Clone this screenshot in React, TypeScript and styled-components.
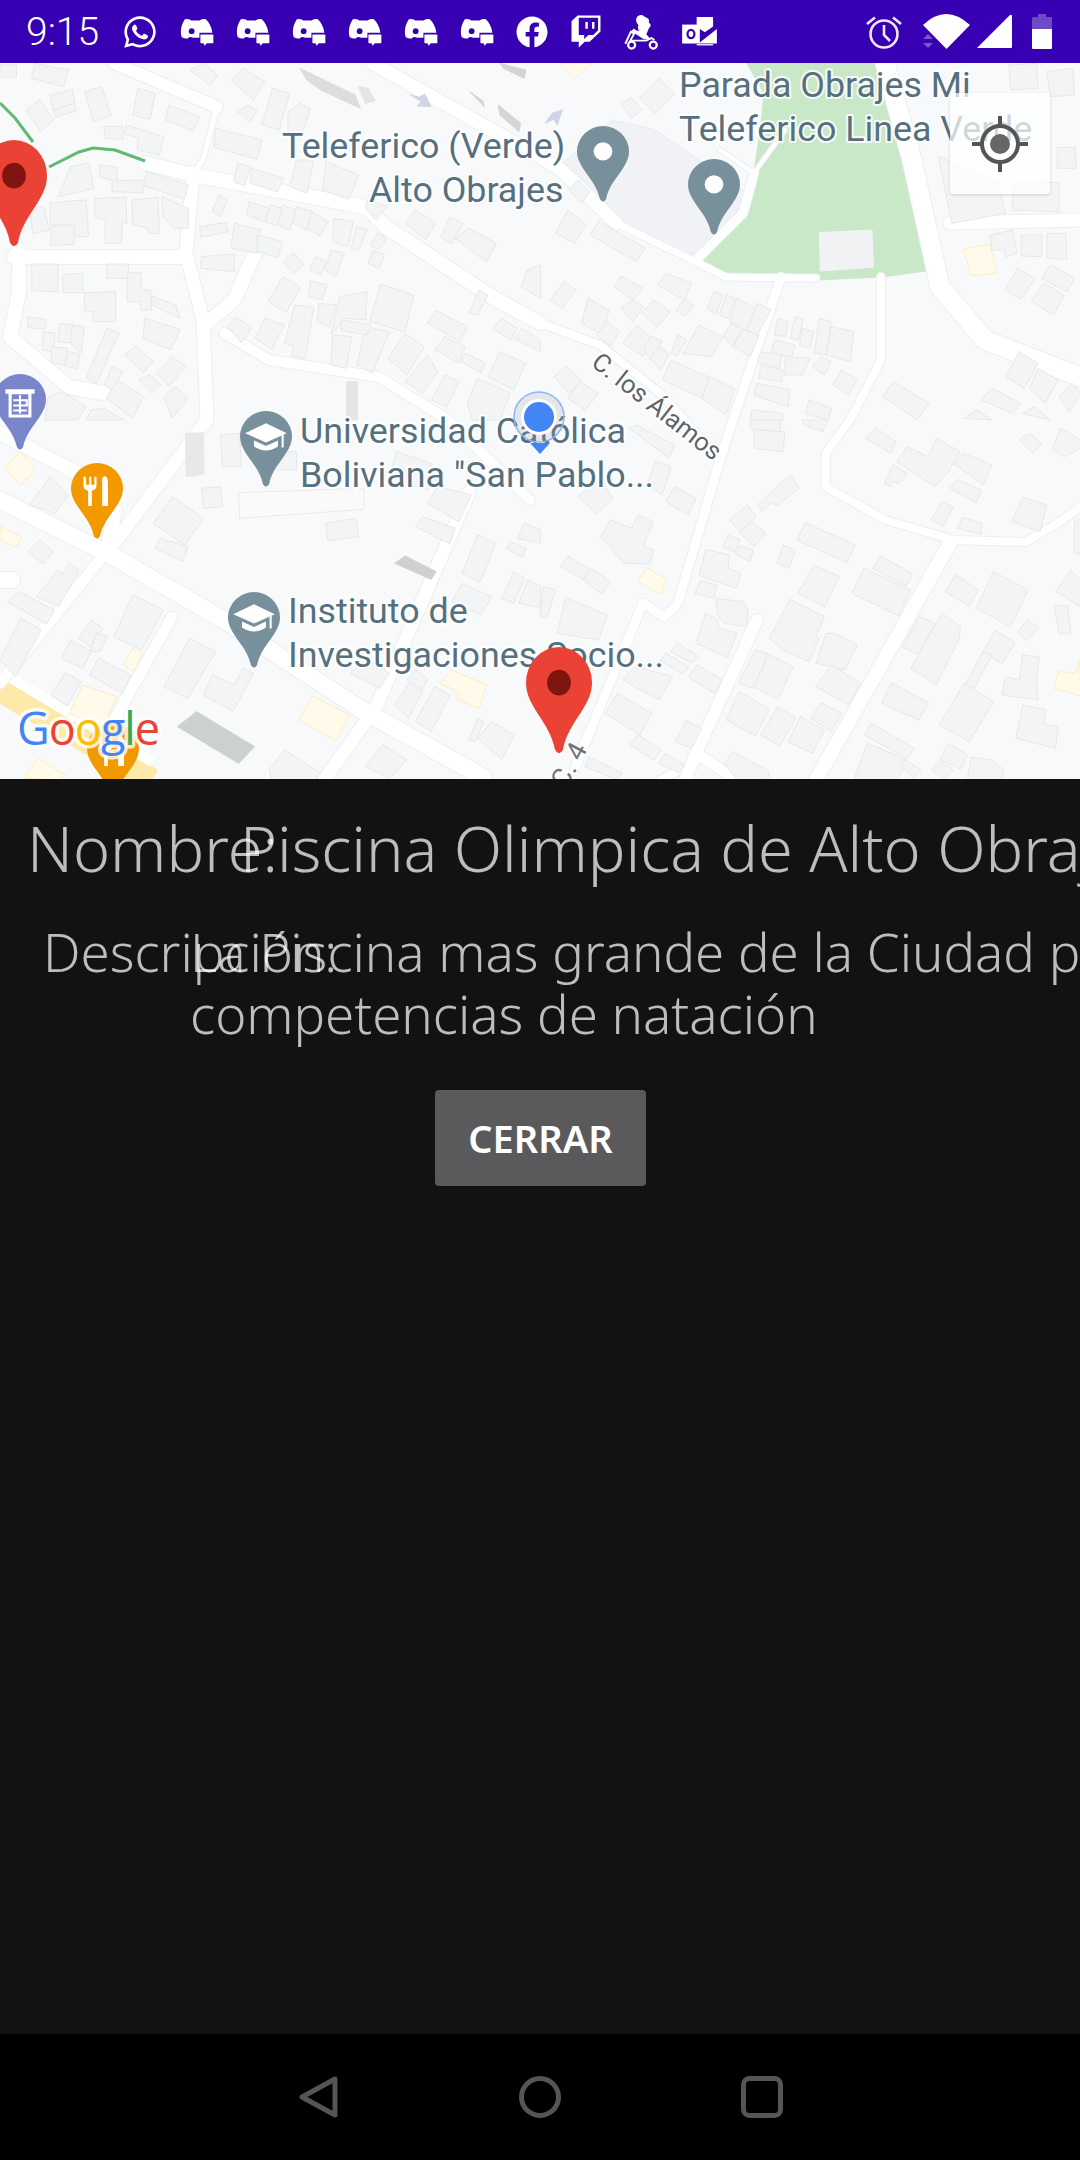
import React from "react";
import styled, { createGlobalStyle } from "styled-components";
import { FaWhatsapp, FaFacebook, FaTwitch } from "react-icons/fa";

const PURPLE = "#3700b3";

const Global = createGlobalStyle`
  html, body { margin: 0; padding: 0; background: #121212; }
  #root { width: 1080px; height: 2160px; }
`;

const Screen = styled.div`
  width: 1080px;
  height: 2160px;
  display: flex;
  flex-direction: column;
  overflow: hidden;
  background: #121212;
`;

const StatusBar = styled.div`
  height: 63px;
  flex: none;
  display: flex;
  align-items: center;
  background: ${PURPLE};
  color: #fff;
  padding: 0 28px 0 26px;
`;

const Clock = styled.span`
  font: 300 39px Roboto, sans-serif;
  width: 73px;
  margin-right: 23px;
`;

const NotifIcons = styled.div`
  display: flex;
  align-items: center;
  gap: 22px;
`;

const SysIcons = styled.div`
  display: flex;
  align-items: center;
  margin-left: auto;
`;

const Glyph = styled.svg<{ $w: number; $h: number; $mr?: number }>`
  display: block;
  flex: none;
  width: ${(p) => p.$w}px;
  height: ${(p) => p.$h}px;
  margin-right: ${(p) => p.$mr ?? 0}px;
`;

const Discord = () => (
  <Glyph $w={34} $h={28} viewBox="0 0 105 85">
    <path
      fill="#fff"
      d="M15 3Q28 0 35 7H60Q67 0 80 3Q97 20 100 45H60V60H40Q30 55 25 62Q15 65 5 58Q-3 30 15 3Z"
    />
    <circle cx="36" cy="40" r="9" fill={PURPLE} />
    <rect x="63" y="50" width="40" height="27" rx="2" fill="#fff" />
    <path d="M72 76H84L76 85Z" fill="#fff" />
  </Glyph>
);

const Scooter = () => (
  <Glyph $w={35} $h={36} viewBox="0 0 110 110">
    <path
      fill="#fff"
      d="M42 6Q56 -4 66 8Q82 12 78 26Q90 32 78 44Q74 54 70 62L84 78H62L50 70L34 60L24 52L30 44Q40 52 48 52Q40 42 46 34Q32 20 42 6Z"
    />
    <path d="M4 92L22 54L32 60L20 82H70L86 74L96 80" fill="none" stroke="#fff" strokeWidth="6" />
    <circle cx="24" cy="96" r="11" fill="none" stroke="#fff" strokeWidth="7" />
    <circle cx="92" cy="96" r="11" fill="none" stroke="#fff" strokeWidth="7" />
  </Glyph>
);

const Outlook = () => (
  <Glyph $w={37} $h={30} viewBox="0 0 110 95">
    <path fill="#fff" d="M46 0H98V30L72 48L46 32Z" />
    <path fill="#fff" d="M52 84L110 38V84Z" />
    <path fill="#fff" d="M46 86H98V90H46Z" />
    <rect x="0" y="24" width="56" height="60" fill="#fff" />
    <ellipse cx="28" cy="54" rx="11" ry="13" fill="none" stroke={PURPLE} strokeWidth="7" />
  </Glyph>
);

const Alarm = () => (
  <Glyph $w={36} $h={35} $mr={21} viewBox="0 0 36 35" fill="none" stroke="#efe9fb" strokeWidth="2.6">
    <circle cx="18" cy="20" r="13.5" />
    <path d="M18 11V21L24 27M1 10L9 3.5M35 10L27 3.5" />
  </Glyph>
);

const Wifi = () => (
  <Glyph $w={47} $h={35} $mr={7} viewBox="0 0 47 35">
    <path fill="#fff" d="M0 11Q23 -11 47 11L23.5 35Z" />
    <path fill="#7a55cc" d="M0 25L5 20L10 25ZM0 29H10L5 34Z" />
  </Glyph>
);

const Signal = () => (
  <Glyph $w={35} $h={35} $mr={20} viewBox="0 0 35 35">
    <path fill="#fff" d="M0 34L33 1Q35 0 35 2V33Q35 34 34 34Z" />
  </Glyph>
);

const Battery = () => (
  <Glyph $w={20} $h={35} viewBox="0 0 20 35">
    <path fill="#7049c9" d="M6 0H14V3H19Q20 3 20 4V15H0V4Q0 3 1 3H6Z" />
    <path fill="#fff" d="M0 15H20V34Q20 35 19 35H1Q0 35 0 34Z" />
  </Glyph>
);

const Whatsapp = styled(FaWhatsapp)`
  width: 36px;
  height: 36px;
  flex: none;
`;
const Facebook = styled(FaFacebook)`
  width: 32px;
  height: 32px;
  flex: none;
`;
const Twitch = styled(FaTwitch)`
  width: 32px;
  height: 37px;
  flex: none;
`;

/* ---------------------- map ---------------------- */

const MapArea = styled.div`
  position: relative;
  height: 716px;
  flex: none;
  overflow: hidden;
  background: #f8f9fb;
`;

const MapSvg = styled.svg`
  display: block;
  width: 1080px;
  height: 716px;
`;

const Block = styled.polygon<{ $fill?: string; $line?: string }>`
  fill: ${(p) => p.$fill ?? "#f2f4f5"};
  stroke: ${(p) => p.$line ?? "#e6e8ea"};
  stroke-width: 1;
  vector-effect: non-scaling-stroke;
`;

const MapLabel = styled.text<{ $size?: number; $color?: string }>`
  font-family: Roboto, sans-serif;
  font-size: ${(p) => p.$size ?? 35.8}px;
  fill: ${(p) => p.$color ?? "#56707f"};
  stroke: #fff;
  stroke-opacity: 0.85;
  stroke-width: 4px;
  stroke-linejoin: round;
  paint-order: stroke;
`;

const GoogleMark = styled.text`
  font-family: "Open Sans", sans-serif;
  font-weight: 500;
  font-size: 45px;
  letter-spacing: -1px;
  stroke: #fff;
  stroke-opacity: 0.8;
  stroke-width: 7px;
  stroke-linejoin: round;
  paint-order: stroke;
`;

const LocateButton = styled.div`
  position: absolute;
  top: 30px;
  right: 30px;
  width: 100px;
  height: 101px;
  display: flex;
  align-items: center;
  justify-content: center;
  border-radius: 3px;
  background: rgba(255, 255, 255, 0.72);
  box-shadow: 0 1px 3px rgba(0, 0, 0, 0.16);
`;

const PIN = "M50 0A50 50 0 0 1 100 50C100 84 64 104 56 144Q50 154 44 144C36 104 0 84 0 50A50 50 0 0 1 50 0Z";

const Pin: React.FC<{
  x: number;
  y: number;
  w?: number;
  h?: number;
  color: string;
  children?: React.ReactNode;
}> = ({ x, y, w = 52, h = 76, color, children }) => (
  <g transform={`translate(${x},${y}) scale(${w / 100},${h / 150})`}>
    <path d={PIN} fill={color} />
    {children}
  </g>
);

const Cap = () => (
  <g fill="#fff">
    <path d="M50 24L90 44L50 62L10 44Z" />
    <path d="M27 58V70Q50 86 73 70V58L50 69Z" />
    <rect x="80" y="46" width="4" height="26" />
  </g>
);

const Dot = () => <circle cx="50" cy="50" r="18" fill="#fff" />;

const Cutlery = () => (
  <g fill="#fff">
    <path d="M24 27V45Q24 53 33 55V85H40V55Q49 53 49 45V27H45V43H39V27H35V43H29V27Z" />
    <path d="M60 85V32Q60 26 66 26Q71 28 71 40V85Z" />
  </g>
);

const Bank = () => (
  <g>
    <path fill="#fff" d="M22 30H78V39H72V86H28V39H22Z" />
    <rect x="34" y="40" width="32" height="40" fill="#7986cb" />
    <path fill="none" stroke="#fff" strokeWidth="4" d="M50 42V78M37 52H63V62H37M37 72H63" />
  </g>
);

const c2 = "0 60 .3448 .3333";
const c3 = "540 60 .3448 .3333";
const c4 = "0 420 .3448 .3333";
const c5 = "540 420 .3448 .3333";
const tf = (s: string) => {
  const [a, b, c, d] = s.split(" ");
  return `translate(${a},${b}) scale(${c},${d})`;
};

const blocks2 = [
  "0,15 48,15 48,52 0,52","100,10 198,30 185,80 92,55","75,150 115,120 155,180 118,215","145,105 210,88 218,130 152,148","155,150 215,130 222,152 160,172",
  "245,95 295,80 322,165 272,185","400,85 450,100 435,178 385,165","490,135 578,170 560,212 480,180","302,200 355,198 358,238 305,235","365,195 475,230 462,285 398,270 400,235 360,220",
  "205,320 258,308 272,385 168,410","290,315 340,322 338,362 415,360 415,398 325,395 325,360 288,352","425,335 546,375 535,418 418,378","145,430 212,422 250,420 257,530 215,530 212,495 145,495",
  "275,415 365,412 368,490 355,490 352,550 305,550 305,480 275,470","382,420 458,412 462,520 432,520 430,505 385,492","470,410 546,445 546,505 505,505 472,470","85,440 128,440 142,510 95,522","147,500 215,495 215,553 147,556",
  "92,612 168,612 168,695 92,692","182,645 240,640 240,698 182,698","310,612 372,612 372,655 310,655","245,698 335,695 335,785 270,785 270,755 245,755","370,638 410,638 410,690 437,690 440,750 408,750 405,725 368,725","440,708 510,735 522,775 440,735",
  "80,770 135,780 130,808 80,802","125,815 160,820 155,875 122,870","172,790 215,795 212,850 168,845","210,795 245,800 235,878 205,850","150,860 195,865 190,915 148,908","195,875 232,882 225,928 188,918",
  "420,775 522,808 495,870 415,835","310,805 345,820 280,970 250,955","362,885 392,858 445,905 415,938","325,920 355,935 330,990 302,975","340,960 415,1010 385,1075 310,1015","402,960 435,945 467,975 440,1000","452,940 500,890 540,920 490,978","475,1010 510,980 545,1015 500,1075","140,1010 180,995 250,1040 225,1080 130,1080","265,1050 300,1045 360,1080 250,1080",
  "670,60 705,25 768,65 735,120","690,155 720,135 745,150 725,188","790,85 840,100 810,210 760,195","835,155 870,130 900,148 870,235 835,220","625,205 760,240 745,298 620,262","690,310 728,320 708,378 678,365","730,325 822,355 805,395 725,370","860,300 910,300 890,400 840,380","945,305 1040,345 1012,418 935,390",
  "550,30 590,10 632,45 610,75","722,425 780,445 770,485 715,465","785,435 818,445 805,498 770,485","820,435 860,450 840,510 805,495","860,440 908,455 890,510 850,490","905,455 952,485 930,528 890,505","968,475 1025,485 1010,560 965,545","1035,500 1065,508 1040,572 1018,565","1095,518 1120,535 1100,570 1075,558","1080,570 1115,585 1100,625 1068,610",
  "960,570 998,580 975,650 940,630","915,590 945,605 930,645 898,630","850,578 882,615 850,640 822,605","680,490 755,510 745,580 670,565","745,525 820,545 805,592 745,575","635,405 658,420 640,470 615,455","580,500 655,487 662,515 582,532","584,590 680,582 680,635 582,625",
  "820,650 872,682 830,758 778,725","900,662 948,675 935,720 895,710","855,735 910,742 885,895 845,888 850,858 825,850","925,730 975,735 955,800 920,785","985,710 1065,695 1060,780 1000,775 960,825","1103,672 1200,705 1175,815 1072,785","1060,800 1130,815 1080,940 1035,915","990,780 1075,795 1065,825 990,812","965,825 1020,830 1005,925 960,915",
  "660,800 685,770 730,805 700,848","768,775 825,795 790,868 740,835","1065,420 1125,440 1090,480 1060,445","1175,490 1205,450 1265,490 1235,538","1278,530 1305,472 1342,490 1310,552","1320,535 1360,505 1440,550 1410,605","1240,790 1265,752 1355,800 1335,845","1262,870 1290,830 1350,860 1330,908","1335,905 1350,880 1408,910 1395,938","1430,805 1455,775 1500,805 1480,840","1490,835 1515,805 1568,840 1568,875","1360,760 1390,690 1415,705 1385,765","1125,895 1175,820 1230,860 1180,945","1175,965 1240,885 1270,935 1225,1000","1252,1020 1290,945 1332,965 1295,1040","1355,1030 1385,955 1480,1000 1450,1080 1370,1080","1415,950 1450,875 1525,910 1490,990","1510,680 1530,630 1568,615 1568,715",
];

const blocks3 = [
  "235,130 265,112 295,150 265,175","290,115 345,55 390,100 335,160","1360,15 1440,10 1445,85 1365,90","1470,35 1545,25 1550,105 1480,110","1195,490 1155,290 1330,365 1350,460","1370,365 1505,368 1505,455 1370,450","1500,262 1552,262 1555,325 1500,325",
  "1305,525 1370,510 1385,580 1350,590 1345,570 1310,570","1395,525 1455,525 1455,590 1395,588","1470,520 1525,520 1528,598 1470,595","1348,690 1385,625 1435,655 1395,718","1455,655 1480,615 1550,655 1528,695","1425,725 1460,668 1520,705 1490,765",
  "215,680 235,648 298,685 270,720","340,675 365,640 440,670 420,720","120,790 140,715 200,750 180,825","235,745 265,720 300,740 270,785","295,760 330,720 378,755 340,800","395,750 420,715 445,738 420,770","165,825 195,785 230,815 205,860","240,850 280,795 320,830 300,890","300,860 325,830 355,845 320,900","320,895 345,860 375,880 350,930","415,880 460,795 530,830 500,890","380,880 400,825 425,840 395,890","530,830 555,790 585,805 560,860","485,745 505,695 530,705 510,765","520,765 540,705 565,715 545,775","550,785 570,715 625,745 605,815","600,810 630,730 670,750 630,825","560,860 590,810 635,825 610,890",
  "680,825 690,775 720,785 712,830","725,835 740,770 762,780 750,840","752,855 760,805 795,815 782,865","795,880 810,775 845,785 830,885","830,885 845,800 910,815 900,905","670,880 680,840 740,855 730,890","630,905 640,875 700,885 695,925","635,955 640,915 705,930 700,965","710,945 712,890 785,895 760,945","620,1005 630,970 725,990 720,1040","610,1080 615,1050 705,1060 705,1080","770,1060 780,1020 845,1045 835,1080","790,920 815,890 845,905 825,945","850,975 875,930 920,960 895,1005",
  "355,960 380,900 495,955 470,1015","470,1015 490,950 565,985 540,1065","80,1015 115,965 170,1000 130,1050","40,950 75,920 120,960 85,1000","30,720 70,665 105,690 65,745","45,520 80,450 135,495 100,550","145,525 170,483 305,565 280,605","85,390 110,360 145,395 120,430","995,1010 1025,965 1128,1030 1095,1080","1280,1020 1310,985 1395,1030 1370,1060","1350,950 1390,875 1445,910 1405,985","1420,985 1445,925 1502,960 1465,1030","1505,1010 1545,970 1568,1000 1535,1055","1230,1075 1265,1050 1310,1080","1400,1060 1435,1040 1480,1080",
];

const blocks4 = [
  "640,45 695,40 700,140 645,140","800,95 860,95 860,150 800,150","945,310 1032,295 1040,350 950,362","585,205 640,200 645,260 590,265","445,310 500,230 590,295 535,375","450,385 465,355 545,380 530,425","85,255 145,170 200,225 160,280","1240,250 1270,200 1368,225 1330,305","1205,320 1225,290 1320,325 1305,372","1150,95 1250,130 1240,210 1130,170","1340,460 1385,345 1438,370 1392,487","1310,545 1340,490 1425,530 1395,585","1468,385 1480,365 1525,385 1515,412","1455,535 1490,455 1522,475 1490,550","1505,550 1530,480 1568,500 1568,565","1500,355 1520,310 1568,330 1568,370",
  "80,395 115,360 155,395 125,432","105,530 170,450 180,465 200,430 230,450 170,560","22,545 55,515 158,570 135,612","0,720 60,595 120,630 45,770","330,650 385,525 475,570 410,690","228,655 265,600 298,625 262,680","262,695 280,640 312,650 290,695","178,715 205,660 265,695 240,745","260,765 285,715 380,765 355,820","148,825 190,758 235,785 195,858","475,800 550,655 625,695 545,835","590,825 615,765 680,795 705,745 735,760 675,875","1015,760 1060,720 1130,760 1100,805",
  "1145,855 1185,790 1225,815 1185,895","1205,905 1260,800 1305,825 1250,935","1180,780 1205,750 1240,775 1225,810","1360,960 1385,895 1402,905 1380,965","1385,955 1425,905 1492,945 1455,1018","1060,1040 1110,975 1180,1020 1130,1075","780,1050 825,990 930,1060 915,1080 790,1080",
];

const blocks5 = [
  "610,0 700,0 695,35 610,25","620,30 710,35 705,95 622,85","760,0 835,0 820,35 765,15","945,55 975,25 1033,65 1018,100","1035,125 1065,80 1125,110 1150,55 1218,95 1185,155 1145,200","998,190 1025,135 1065,160 1040,190 1020,185 1015,200","1200,130 1230,100 1310,135 1285,195","1190,205 1210,178 1280,210 1265,248","1135,300 1165,245 1198,262 1170,320","1212,325 1225,292 1282,310 1278,342","1368,305 1400,232 1470,255 1450,335","1390,60 1420,40 1455,70 1430,100","1485,90 1510,25 1568,60 1568,85 1520,110",
  "260,25 280,15 390,75 375,115","310,195 335,125 380,140 355,225","365,245 390,200 452,235 430,285","110,230 170,170 212,235 165,282","175,350 205,300 265,325 285,285 328,305 300,378 330,390 318,432 245,430","60,440 80,408 140,445 125,478","125,480 150,445 205,485 180,522","0,590 10,500 45,510 20,595","50,640 75,532 195,585 170,660",
  "630,255 725,165 752,205 690,255 670,250 645,275","550,300 600,255 628,290 580,335","580,340 615,305 655,340 620,380","530,380 545,345 580,360 565,398","568,405 580,378 618,390 610,425","462,468 480,388 550,405 545,445 582,460 570,505","450,520 465,482 512,495 505,535","510,535 590,545 603,570 600,620 535,610 515,585","452,670 480,580 515,600 520,625 572,640 545,712",
  "745,360 770,308 915,375 890,428","688,430 705,375 740,390 722,445","748,520 795,435 868,470 825,562","905,520 940,445 1075,510 1040,588","965,445 985,408 1080,460 1062,498","665,655 725,538 825,590 800,650 810,655 780,725 705,690","800,730 830,640 855,640 920,675 885,750","800,800 845,735 930,790 895,855","575,790 625,690 660,700 620,805","620,800 665,705 735,740 690,838","540,900 578,815 665,868 625,948","640,945 690,860 742,895 695,978","720,965 755,890 825,930 790,1000","785,895 815,848 875,880 845,935","378,695 400,670 460,710 440,730","348,722 365,700 430,740 415,762","430,772 455,735 530,780 505,820","240,780 275,740 385,770 345,840","190,880 225,820 325,880 290,945","392,965 425,902 468,925 440,985","260,975 285,945 352,990 330,1020","345,1030 365,1000 420,1035 405,1060","140,1010 240,1060 225,1080 130,1040","535,1030 560,995 665,1055 660,1080 570,1080",
  "990,850 1020,788 1128,850 1098,900","940,945 960,910 1085,985 1065,1015","910,1080 950,970 1065,1020 1035,1080","1050,680 1100,590 1145,610 1100,705","1075,745 1165,580 1220,620 1215,660 1150,795","1175,515 1205,465 1272,510 1245,558","1265,565 1315,455 1415,510 1365,620","1285,695 1320,630 1378,668 1340,730","1230,800 1285,695 1310,705 1260,805","1158,915 1230,790 1315,845 1245,965","1340,825 1350,770 1390,780 1400,705 1448,712 1440,785 1445,840","1380,955 1400,855 1468,870 1460,912 1503,920 1495,985","1160,1020 1185,970 1240,1005 1220,1048","1135,1050 1160,1025 1200,1050 1170,1080","1240,1080 1250,1012 1310,1020 1345,1050 1340,1080","1045,1040 1060,1020 1105,1050 1085,1075","1385,635 1415,598 1445,625 1410,662","1490,555 1530,558 1540,640 1505,640","1495,515 1540,450 1568,480 1568,560","1550,300 1568,300 1568,400 1550,400",
];

const yellow: [string, string][] = [
  [c3, "1228,568 1305,552 1325,638 1250,648"],
  [c3, "60,10 150,10 100,55"],
  [c4, "15,145 58,95 105,148 60,195"],
  [c4, "0,320 60,350 50,382 0,360"],
  [c4, "385,685 415,700 388,755 358,735"],
  [c4, "240,795 338,830 300,920 200,880"],
  [c4, "905,828 1015,885 975,962 868,900"],
  [c4, "1310,750 1412,795 1390,865 1325,840 1330,815 1275,790"],
  [c4, "70,1075 110,1015 190,1065 170,1080"],
  [c5, "310,443 368,478 348,522 283,485"],
  [c5, "1505,755 1555,760 1565,715 1568,828 1490,805"],
];

const shades: [string, string, string][] = [
  [c2, "870,25 930,55 1030,105 1045,145 930,90 890,60", "#dcdede"],
  [c2, "1040,80 1060,130 1088,122 1068,85", "#e4e6e6"],
  [c2, "1362,95 1405,140 1400,122", "#d4d6d6"],
  [c2, "1445,135 1510,190 1505,215 1450,165", "#d4d6d6"],
  [c2, "1450,10 1525,30 1520,55 1460,25", "#d3d5d5"],
  [c2, "1005,965 1037,965 1037,1080 1005,1080", "#e3e5e5"],
  [c4, "538,40 590,38 592,162 540,170", "#e7e9e9"],
  [c4, "1145,430 1175,408 1265,455 1250,478", "#cfd1d1"],
  [c4, "515,920 570,875 738,980 692,1030", "#ccd0cf"],
  [c2, "1190,105 1215,112 1232,102 1250,140 1210,138 1222,125", "#d2d5e8"],
  [c3, "15,190 35,160 65,150 50,195 40,178", "#d2d5e8"],
];

/* [points, width] */
const roads: [string, number][] = [
  ["114,63 217,107", 12],
  ["145,163 193,175 366,207 386,227 497,300 540,323", 14],
  ["540,323 600,345 662,395 720,460", 8],
  ["372,63 540,157 561,170 616,223", 13],
  ["616,223 692,260 726,277 816,278", 7],
  ["217,107 203,160 193,173", 5],
  ["193,173 186,253 203,320 207,420 107,553", 13],
  ["14,257 186,257", 14],
  ["19,250 19,293 10,337 69,387 103,393", 14],
  ["255,253 234,300 207,323", 14],
  ["224,333 269,360 379,377 448,420 530,500", 10],
  ["754,173 743,213 699,257", 9],
  ["720,150 754,173 785,130", 4],
  ["885,63 912,160 940,287 985,340 1080,377", 19],
  ["950,223 1080,220", 13],
  ["781,277 733,420 719,463 678,603 664,617 643,603 574,770", 9],
  ["881,277 881,360 850,420 826,453 826,487 885,520 954,540 1026,542 1055,525 1080,507", 8],
  ["950,543 816,780", 14],
  ["757,620 702,740 685,780", 12],
  ["702,757 737,780", 11],
  ["0,500 107,553 224,620 362,710 483,777", 17],
  ["0,433 77,473 115,510 107,553", 14],
  ["100,560 0,683", 11],
  ["172,617 114,720", 11],
  ["469,493 376,707 324,780", 13],
  ["0,580 12,580", 16],
  ["680,770 660,780", 8],
];

const Map = () => (
  <MapArea>
    <MapSvg viewBox="0 63 1080 716">
      <rect x="0" y="63" width="1080" height="716" fill="#f8f9fb" />
      <g transform={tf(c3)}>
        <Block $fill="#f1f2f5" $line="#e9ebee" points="210,180 335,210 600,400 520,555 460,585 410,575 230,480 60,315" />
        <Block
          $fill="#c8e8c8"
          $line="#c8e8c8"
          points="600,10 970,10 1050,270 1140,630 1000,650 810,660 530,640 460,600 520,555 590,420 620,340 640,200 650,100"
        />
        <Block $fill="#f1f2f4" $line="#f1f2f4" points="810,518 963,510 967,622 813,633" />
      </g>
      <polyline points="0,690 152,780" fill="none" stroke="#fde9a9" strokeWidth="24" />
      <polyline points="0,672 152,762" fill="none" stroke="#fff" strokeWidth="10" />
      <g fill="none" strokeLinecap="round" strokeLinejoin="round">
        {roads.map(([p, w]) => (
          <polyline key={p + "b"} points={p} stroke="#eceef0" strokeWidth={w + 2} />
        ))}
        {roads.map(([p, w]) => (
          <polyline key={p} points={p} stroke="#fff" strokeWidth={w} />
        ))}
      </g>
      <g transform={tf(c2)}>
        {blocks2.map((p) => (
          <Block key={p} points={p} />
        ))}
      </g>
      <g transform={tf(c3)}>
        {blocks3.map((p) => (
          <Block key={p} points={p} />
        ))}
      </g>
      <g transform={tf(c4)}>
        {blocks4.map((p) => (
          <Block key={p} points={p} />
        ))}
        <Block $fill="#fafafa" $line="#e8eaeb" points="692,218 1055,205 1055,268 695,295" />
      </g>
      <g transform={tf(c5)}>
        {blocks5.map((p) => (
          <Block key={p} points={p} />
        ))}
      </g>
      {yellow.map(([t, p]) => (
        <g key={p} transform={tf(t)}>
          <Block $fill="#fffaea" $line="#fdeec0" points={p} />
        </g>
      ))}
      {shades.map(([t, p, f]) => (
        <g key={p} transform={tf(t)}>
          <Block $fill={f} $line={f} points={p} />
        </g>
      ))}
      <polyline points="0,103 15,118 33,142" fill="none" stroke="#62b96f" strokeWidth="3" />
      <polyline points="49,167 79,152 93,148 115,150 145,161" fill="none" stroke="#62b96f" strokeWidth="3" />

      <MapLabel x="282" y="158">Teleferico (Verde)</MapLabel>
      <MapLabel x="369" y="202">Alto Obrajes</MapLabel>
      <MapLabel x="679" y="97">Parada Obrajes Mi</MapLabel>
      <MapLabel x="679" y="141">Teleferico Linea Verde</MapLabel>
      <MapLabel x="300" y="443">Universidad Católica</MapLabel>
      <MapLabel x="300" y="487">Boliviana "San Pablo...</MapLabel>
      <MapLabel x="288" y="623">Instituto de</MapLabel>
      <MapLabel x="288" y="667">Investigaciones Socio...</MapLabel>
      <MapLabel x="0" y="0" $size={25.5} $color="#5f6368" transform="translate(590,365) rotate(38)">
        C. los Álamos
      </MapLabel>
      <MapLabel x="0" y="0" $size={27} $color="#70757a" transform="translate(566,790) rotate(-62)">
        C. 4
      </MapLabel>

      <Pin x={577} y={126} color="#78909c"><Dot /></Pin>
      <Pin x={688} y={159} color="#78909c"><Dot /></Pin>
      <Pin x={240} y={411} color="#78909c"><Cap /></Pin>
      <Pin x={228} y={592} color="#78909c"><Cap /></Pin>
      <Pin x={-6} y={374} color="#7986cb"><Bank /></Pin>
      <Pin x={71} y={463} color="#f29900"><Cutlery /></Pin>
      <Pin x={87} y={723} color="#f29900"><Cutlery /></Pin>
      <Pin x={-19} y={140} w={66} h={107} color="#ea4335">
        <circle cx="50" cy="50" r="18" fill="#7f1410" />
      </Pin>
      <Pin x={526} y={647} w={66} h={107} color="#ea4335">
        <circle cx="50" cy="50" r="18" fill="#7f1410" />
      </Pin>

      <circle cx="539" cy="417" r="25" fill="#9aa0a6" fillOpacity="0.22" stroke="#8ab4f8" strokeWidth="1.5" />
      <circle cx="539" cy="417" r="18" fill="#fff" />
      <circle cx="539" cy="417" r="15" fill="#4285f4" />
      <path d="M530 443H550L540 454Z" fill="#4285f4" />

      <GoogleMark x="17" y="745">
        <tspan fill="#4285f4">G</tspan>
        <tspan fill="#ea4335">o</tspan>
        <tspan fill="#fbbc05">o</tspan>
        <tspan fill="#4285f4">g</tspan>
        <tspan fill="#34a853">l</tspan>
        <tspan fill="#ea4335">e</tspan>
      </GoogleMark>
    </MapSvg>
    <LocateButton>
      <svg width="60" height="60" viewBox="0 0 60 60" fill="none" stroke="#555" strokeWidth="4">
        <circle cx="30" cy="30" r="18" />
        <circle cx="30" cy="30" r="10" fill="#666" stroke="none" />
        <path d="M30 2V12M30 48V58M2 30H12M48 30H58" />
      </svg>
    </LocateButton>
  </MapArea>
);

/* ---------------------- dialog ---------------------- */

const Dialog = styled.div`
  flex: 1;
  min-height: 0;
  display: flex;
  flex-direction: column;
  overflow: hidden;
  background: #121212;
  font-family: "Noto Sans", sans-serif;
  font-weight: 300;
  color: rgba(255, 255, 255, 0.72);
`;

const OverlapRow = styled.div<{ $size: number; $line: number; $top: number; $valueX: number; $labelX: number }>`
  display: grid;
  margin-top: ${(p) => p.$top}px;
  font-size: ${(p) => p.$size}px;
  line-height: ${(p) => p.$line}px;
  white-space: nowrap;

  & > * {
    grid-area: 1 / 1;
  }
  & > :first-child {
    padding-left: ${(p) => p.$labelX}px;
  }
  & > :last-child {
    padding-left: ${(p) => p.$valueX}px;
  }
`;

const CloseButton = styled.button`
  align-self: center;
  width: 211px;
  height: 96px;
  margin-top: 45px;
  margin-left: 1px;
  border: 0;
  border-radius: 4px;
  background: #5a5a5c;
  color: #fff;
  font: 600 38px "Noto Sans", sans-serif;
  letter-spacing: 0;
`;

const NavBar = styled.div`
  height: 126px;
  flex: none;
  display: grid;
  grid-template-columns: 40px 42px 42px;
  justify-content: center;
  column-gap: 180px;
  padding: 42px 0 0 1px;
  box-sizing: border-box;
  background: #000;
`;

const NavIcon = styled.svg`
  display: block;
  width: 42px;
  height: 42px;
  fill: none;
  stroke: #555;
  stroke-width: 5;
  stroke-linejoin: round;
`;

export default function App() {
  return (
    <Screen>
      <Global />
      <StatusBar>
        <Clock>9:15</Clock>
        <NotifIcons>
          <Whatsapp />
          <Discord />
          <Discord />
          <Discord />
          <Discord />
          <Discord />
          <Discord />
          <Facebook />
          <Twitch />
          <Scooter />
          <Outlook />
        </NotifIcons>
        <SysIcons>
          <Alarm />
          <Wifi />
          <Signal />
          <Battery />
        </SysIcons>
      </StatusBar>
      <Map />
      <Dialog>
        <OverlapRow $size={63} $line={84} $top={27} $labelX={27} $valueX={240}>
          <span>Nombre:</span>
          <span>Piscina Olimpica de Alto Obrajes</span>
        </OverlapRow>
        <OverlapRow $size={52.8} $line={62} $top={31} $labelX={43} $valueX={190}>
          <span>Descripción:</span>
          <span>
            La Piscina mas grande de la Ciudad para
            <br />
            competencias de natación
          </span>
        </OverlapRow>
        <CloseButton>CERRAR</CloseButton>
      </Dialog>
      <NavBar>
        <NavIcon viewBox="0 0 42 42">
          <path d="M36 3V39L3 21Z" />
        </NavIcon>
        <NavIcon viewBox="0 0 42 42">
          <ellipse cx="21" cy="21" rx="18.5" ry="18.5" />
        </NavIcon>
        <NavIcon viewBox="0 0 42 42">
          <rect x="2.5" y="2.5" width="37" height="37" rx="6" />
        </NavIcon>
      </NavBar>
    </Screen>
  );
}
